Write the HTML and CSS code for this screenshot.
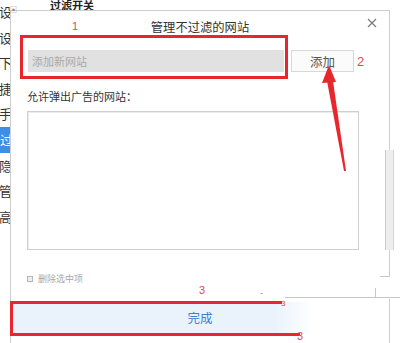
FILE: index.html
```html
<!DOCTYPE html>
<html lang="zh-CN">
<head>
<meta charset="utf-8">
<title>管理不过滤的网站</title>
<link rel="stylesheet" href="styles.css">
</head>
<body>
<div class="app">
  <aside class="side">
    <div class="si">设置</div>
    <div class="si">设置</div>
    <div class="si">下载</div>
    <div class="si">捷径</div>
    <div class="si">手势</div>
    <div class="si on">过滤</div>
    <div class="si">隐私</div>
    <div class="si">管理</div>
    <div class="si">高级</div>
  </aside>
  <main class="main">
    <h2 class="mh">过滤开关</h2>
  </main>

  <div class="dialog">
    <div class="dtitle">管理不过滤的网站</div>
    <button class="close" aria-label="关闭"><svg width="10" height="10" viewBox="0 0 10 10"><path d="M1 1L9 9M9 1L1 9" stroke="#7a7a7a" stroke-width="1.2" fill="none"/></svg></button>
    <div class="addrow">
      <input class="site" type="text" placeholder="添加新网站">
      <button class="addbtn">添加</button>
    </div>
    <div class="lbl">允许弹出广告的网站：</div>
    <div class="list"></div>
    <div class="del"><span class="cb"></span>删除选中项</div>
    <div class="foot">完成</div>
  </div>

  <span class="gear">▣</span>
  <span class="scroll"></span>
  <span class="cut"></span>
  <span class="hl hl1"></span>
  <span class="hl hl2"></span>
  <span class="tick"></span>
  <span class="dash">-</span>

  <span class="rbox rbox1"></span>
  <span class="rbox rbox3"></span>
  <span class="rext"></span>
  <span class="num n1">1</span>
  <span class="num n2">2</span>
  <span class="num n3">3</span>
  <span class="num n3b">3</span>
  <span class="num n3c">3</span>
  <svg class="arrow" width="400" height="343" viewBox="0 0 400 343">
    <polygon points="329,65 322,83 336,82" fill="#e8262d"/>
    <polygon points="327,81 333,81 346,171 344,171" fill="#e8262d"/>
  </svg>
</div>
</body>
</html>
```

FILE: styles.css
```css
* { box-sizing: border-box; }
html, body { margin: 0; padding: 0; background: #fff; }
body { font-family: "Noto Sans CJK SC", "Microsoft YaHei", sans-serif; }

.app {
  position: relative;
  width: 400px;
  height: 343px;
  overflow: hidden;
  display: flex;
  background: #fff;
}

/* background app */
.side {
  width: 10px;
  flex: none;
  overflow: hidden;
  display: flex;
  flex-direction: column;
  margin-top: -1px;
}
.si {
  height: 25.6px;
  line-height: 25.6px;
  font-size: 13px;
  color: #333;
  white-space: nowrap;
  margin-left: -1px;
  padding-left: 0;
}
.si.on { background: #3d8ee6; color: #fff; margin-left: 0; padding-left: 0; }
.main { flex: 1; padding-left: 40px; }
.mh {
  margin: 0;
  font-size: 11px;
  line-height: 11px;
  font-weight: bold;
  color: #222;
  margin-top: 0;
}

/* dialog */
.dialog {
  position: absolute;
  left: 10px;
  top: 10px;
  width: 380px;
  height: 345px;
  background: #fff;
  border: 1px solid #cdcdcd;
  border-bottom: none;
  display: flex;
  flex-direction: column;
}
.dtitle {
  height: 32px;
  line-height: 32px;
  text-align: center;
  font-size: 12.3px;
  color: #333;
}
.close {
  position: absolute;
  right: 12px;
  top: 7px;
  width: 10px;
  height: 10px;
  padding: 0;
  border: 0;
  background: none;
  display: flex;
}
.addrow {
  display: flex;
  gap: 7px;
  margin-top: 7px;
  margin-left: 17px;
  height: 22px;
}
.site {
  width: 256px;
  height: 22px;
  border: 0;
  background: #e1e1e1;
  padding: 0 0 0 4px;
  font-family: inherit;
  font-size: 11px;
  color: #333;
  outline: none;
}
.site::placeholder { color: #a9a9a9; }
.addbtn {
  width: 63px;
  height: 22px;
  border: 1px solid #d8d8d8;
  background: #fbfbfb;
  font-family: inherit;
  font-size: 12.5px;
  color: #555;
  padding: 0;
}
.lbl {
  margin-top: 16px;
  margin-left: 16px;
  height: 16px;
  line-height: 16px;
  font-size: 11px;
  color: #333;
}
.list {
  margin-top: 7px;
  margin-left: 16px;
  width: 332px;
  height: 139px;
  border: 1px solid #cfcfcf;
  box-shadow: inset 1px 1px 0 #ececec;
}
.del {
  margin-top: 22px;
  margin-left: 16px;
  height: 14px;
  line-height: 14px;
  font-size: 9px;
  color: #a8a8a8;
  display: flex;
  align-items: center;
  gap: 5px;
}
.cb {
  width: 6px;
  height: 6px;
  border: 1px solid #b5b5b5;
  background: #eee;
}
.foot {
  margin-top: 16px;
  height: 32px;
  line-height: 32px;
  text-align: center;
  font-size: 12.5px;
  color: #3b80d6;
  background: linear-gradient(to right, #eaf3fc 0, #eaf3fc 70%, #fff 80%);
}

/* edit artifacts */
.gear {
  position: absolute;
  left: 10px;
  top: 5px;
  font-size: 7px;
  line-height: 8px;
  color: #8a8a8a;
}
.scroll {
  position: absolute;
  left: 385px;
  top: 150px;
  width: 9px;
  height: 100px;
  background: #ededed;
  border-left: 1px solid #c9c9c9;
  border-right: 1px solid #d6d6d6;
}
.cut {
  position: absolute;
  left: 386px;
  top: 277px;
  width: 6px;
  height: 22px;
  background: #fff;
}
.hl { position: absolute; height: 1px; background: #c8c8c8; }
.hl1 { left: 380px; top: 276px; width: 10px; }
.hl2 { left: 285px; top: 297px; width: 115px; }
.tick {
  position: absolute;
  left: 375px;
  top: 288px;
  width: 1px;
  height: 9px;
  background: #c8c8c8;
}
.dash {
  position: absolute;
  left: 260px;
  top: 288px;
  font-size: 9px;
  line-height: 10px;
  color: #888;
}

/* annotations */
.rbox { position: absolute; border: 3px solid #e8262d; }
.rbox1 { left: 20px; top: 35px; width: 268px; height: 44px; }
.rbox3 {
  left: 10px;
  top: 301px;
  width: 272px;
  height: 35px;
  border-right: none;
}
.rext {
  position: absolute;
  left: 282px;
  top: 333px;
  width: 18px;
  height: 3px;
  background: #e8262d;
}
.num {
  position: absolute;
  color: #e04a4f;
  font-family: "Liberation Sans", Arial, sans-serif;
  line-height: 1;
}
.n1 { left: 72px; top: 21px; font-size: 11px; }
.n2 { left: 357px; top: 55px; font-size: 13px; }
.n3 { left: 199px; top: 285px; font-size: 11px; }
.n3b { left: 281px; top: 300px; font-size: 8px; }
.n3c { left: 297px; top: 331px; font-size: 11px; }
.arrow { position: absolute; left: 0; top: 0; pointer-events: none; }
```
